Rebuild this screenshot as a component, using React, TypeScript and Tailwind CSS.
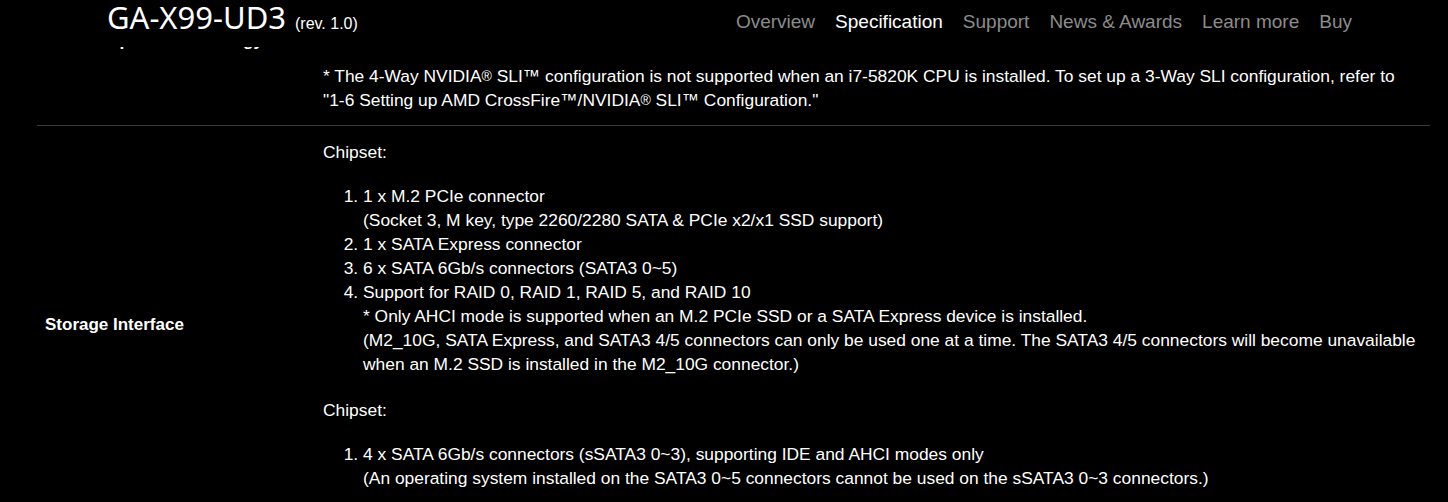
import React from "react";

const NAV = [
  { label: "Overview", active: false },
  { label: "Specification", active: true },
  { label: "Support", active: false },
  { label: "News & Awards", active: false },
  { label: "Learn more", active: false },
  { label: "Buy", active: false },
];

function Reg() {
  return <sup className="text-[14px] leading-none relative -top-[1px]">®</sup>;
}

function Header() {
  return (
    <div className="absolute top-0 left-0 right-0 z-10 h-[47px] bg-black flex items-start">
      <div className="pl-[107px] flex items-baseline">
        <span className="text-[31px] leading-[34px] text-white font-['Noto_Sans',sans-serif]">
          GA-X99-UD3
        </span>
        <span className="ml-[9px] text-[16px] text-white font-['Liberation_Sans',Arial,sans-serif]">
          (rev. 1.0)
        </span>
      </div>
      <nav className="ml-auto mr-[96px] mt-[10px] flex gap-[20px] font-['Liberation_Sans',Arial,sans-serif] text-[19px] leading-[24px]">
        {NAV.map((n) => (
          <a key={n.label} className={n.active ? "text-white" : "text-[#8c8c8c]"}>
            {n.label}
          </a>
        ))}
      </nav>
    </div>
  );
}

function Row({ label, children }: { label: string; children: React.ReactNode }) {
  return (
    <div className="flex items-center border-b border-[#3a3a3a]">
      <div className="w-[286px] shrink-0 pl-[8px] text-[17px] font-bold text-white">{label}</div>
      <div className="flex-1 text-white">{children}</div>
    </div>
  );
}

export default function App() {
  return (
    <div className="relative w-[1448px] h-[502px] overflow-hidden bg-black font-['Liberation_Sans',Arial,sans-serif] text-[17.4px] leading-[24px]">
      <Header />
      <div className="mx-[37px] w-[1393px] -mt-[43px]">
        <Row label="Multi-Graphics Technology">
          <div className="pt-[11px] pb-[13px]">
            <p>1. Support for NVIDIA<Reg /> Quad-GPU SLI™ and 4-Way/3-Way/2-Way NVIDIA<Reg /> SLI™ technologies</p>
            <p>2. Support for AMD Quad-GPU CrossFire™ and 4-Way/3-Way/2-Way AMD CrossFire™ technologies</p>
            <p>&nbsp;</p>
            <p>&nbsp;</p>
            <p>
              * The 4-Way NVIDIA<Reg /> SLI™ configuration is not supported when an i7-5820K CPU is installed. To set up a 3-Way SLI configuration, refer to
              <br />
              "1-6 Setting up AMD CrossFire™/NVIDIA<Reg /> SLI™ Configuration."
            </p>
          </div>
        </Row>
        <Row label="Storage Interface">
          <div className="pt-[14px] pb-[34px]">
            <p>Chipset:</p>
            <ol className="list-decimal pl-[40px] mt-[20px]">
              <li>
                1 x M.2 PCIe connector
                <br />
                (Socket 3, M key, type 2260/2280 SATA &amp; PCIe x2/x1 SSD support)
              </li>
              <li>1 x SATA Express connector</li>
              <li>6 x SATA 6Gb/s connectors (SATA3 0~5)</li>
              <li>
                Support for RAID 0, RAID 1, RAID 5, and RAID 10
                <br />* Only AHCI mode is supported when an M.2 PCIe SSD or a SATA Express device is installed.
                <br />
                (M2_10G, SATA Express, and SATA3 4/5 connectors can only be used one at a time. The SATA3 4/5 connectors will become unavailable
                <br />
                when an M.2 SSD is installed in the M2_10G connector.)
              </li>
            </ol>
            <p className="mt-[22px]">Chipset:</p>
            <ol className="list-decimal pl-[40px] mt-[20px]">
              <li>
                4 x SATA 6Gb/s connectors (sSATA3 0~3), supporting IDE and AHCI modes only
                <br />
                (An operating system installed on the SATA3 0~5 connectors cannot be used on the sSATA3 0~3 connectors.)
              </li>
            </ol>
          </div>
        </Row>
      </div>
    </div>
  );
}
